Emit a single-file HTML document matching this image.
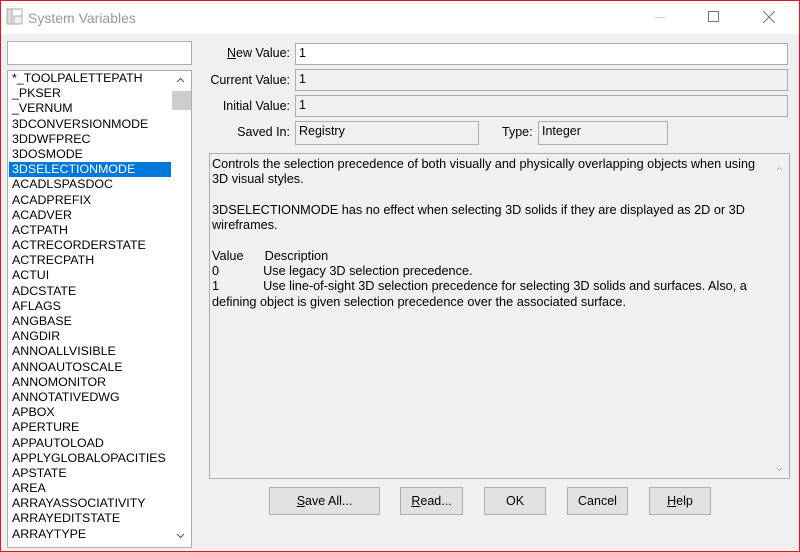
<!DOCTYPE html>
<html><head><meta charset="utf-8"><style>
*{box-sizing:border-box;margin:0;padding:0}
body{width:800px;height:552px;overflow:hidden;background:#f0f0f0;font-family:"Liberation Sans",Arial,sans-serif;font-size:12.5px;color:#000;position:relative}
.win{position:absolute;left:0;top:0;width:800px;height:552px;border:1px solid #e81123;background:#f0f0f0}
.title{position:absolute;left:0;top:0;width:798px;height:33px;background:#fff}
.title .t{position:absolute;left:27px;top:9px;font-size:14px;color:#999}
.abs{position:absolute}
.box{position:absolute;border:1px solid #adadad;background:#f0f0f0;padding:2px 3px;font-size:12.5px}
.lbl{position:absolute;text-align:right;width:100px}
.list{position:absolute;left:6px;top:69px;width:185px;height:478px;border:1px solid #adadad;background:#fff;overflow:hidden}
.list div{height:15.2px;line-height:15.2px;padding-left:3px;font-size:12.4px;width:162px;margin-left:1px;white-space:nowrap}
.sel{background:#0078d7;color:#fff}
.btn{position:absolute;top:486px;height:28px;border:1px solid #adadad;background:#e1e1e1;text-align:center;line-height:26px;font-size:12.5px}
.desc{position:absolute;left:208px;top:152px;width:581px;height:326px;border:1px solid #adadad;background:#f0f0f0;padding:3px 0 0 2px;line-height:15.3px;font-size:12.7px}
u{text-decoration:underline}
</style></head><body><div class="win">
<div class="title">
<svg class="abs" style="left:5px;top:7px" width="18" height="18"><rect x="1" y="1" width="15" height="15" fill="none" stroke="#aaa"/><rect x="1" y="1" width="5" height="15" fill="#ddd" stroke="#aaa"/><rect x="8" y="8" width="8" height="8" fill="#eee" stroke="#aaa"/></svg>
<div class="t">System Variables</div>
<div class="abs" style="left:654px;top:16px;width:10px;height:1px;background:#ccc"></div>
<div class="abs" style="left:707px;top:10px;width:11px;height:11px;border:1px solid #777"></div>
<svg class="abs" style="left:762px;top:10px" width="12" height="12"><path d="M0 0L12 12M12 0L0 12" stroke="#777" stroke-width="1"/></svg>
</div>
<div class="abs" style="left:6px;top:40px;width:185px;height:24px;border:1px solid #adadad;background:#fff"></div>
<div class="list">
<div>*_TOOLPALETTEPATH</div><div>_PKSER</div><div>_VERNUM</div><div>3DCONVERSIONMODE</div><div>3DDWFPREC</div><div>3DOSMODE</div><div class="sel">3DSELECTIONMODE</div><div>ACADLSPASDOC</div><div>ACADPREFIX</div><div>ACADVER</div><div>ACTPATH</div><div>ACTRECORDERSTATE</div><div>ACTRECPATH</div><div>ACTUI</div><div>ADCSTATE</div><div>AFLAGS</div><div>ANGBASE</div><div>ANGDIR</div><div>ANNOALLVISIBLE</div><div>ANNOAUTOSCALE</div><div>ANNOMONITOR</div><div>ANNOTATIVEDWG</div><div>APBOX</div><div>APERTURE</div><div>APPAUTOLOAD</div><div>APPLYGLOBALOPACITIES</div><div>APSTATE</div><div>AREA</div><div>ARRAYASSOCIATIVITY</div><div>ARRAYEDITSTATE</div><div>ARRAYTYPE</div>
<svg class="abs" style="left:168px;top:6px" width="9" height="6"><path d="M1 5L4.5 1.5L8 5" fill="none" stroke="#555"/></svg>
<div class="abs" style="left:163px;top:20px;width:19px;height:19px;background:#cdcdcd"></div>
<svg class="abs" style="left:168px;top:462px" width="9" height="6"><path d="M1 1L4.5 4.5L8 1" fill="none" stroke="#555"/></svg>
</div>
<div class="lbl" style="left:189px;top:45px"><u>N</u>ew Value:</div>
<div class="lbl" style="left:189px;top:72px">Current Value:</div>
<div class="lbl" style="left:189px;top:98px">Initial Value:</div>
<div class="lbl" style="left:189px;top:124px">Saved In:</div>
<div class="box" style="left:294px;top:42px;width:493px;height:22px;background:#fff">1</div>
<div class="box" style="left:294px;top:68px;width:493px;height:22px">1</div>
<div class="box" style="left:294px;top:94px;width:493px;height:22px">1</div>
<div class="box" style="left:294px;top:120px;width:184px;height:24px">Registry</div>
<div class="abs" style="left:501px;top:124px">Type:</div>
<div class="box" style="left:537px;top:120px;width:130px;height:24px">Integer</div>
<div class="desc">Controls the selection precedence of both visually and physically overlapping objects when using<br>3D visual styles.<br><br>3DSELECTIONMODE has no effect when selecting 3D solids if they are displayed as 2D or 3D<br>wireframes.<br><br>Value&nbsp;&nbsp;&nbsp;&nbsp;&nbsp;&nbsp;Description<br>0<span style="padding-left:44px">Use legacy 3D selection precedence.</span><br>1<span style="padding-left:44px">Use line-of-sight 3D selection precedence for selecting 3D solids and surfaces. Also, a</span><br>defining object is given selection precedence over the associated surface.
<svg class="abs" style="left:566px;top:12px" width="7" height="5"><path d="M1 4L3.5 1.5L6 4" fill="none" stroke="#bbb"/></svg>
<svg class="abs" style="left:566px;top:313px" width="7" height="5"><path d="M1 1L3.5 3.5L6 1" fill="none" stroke="#bbb"/></svg>
</div>
<div class="btn" style="left:268px;width:111px"><u>S</u>ave All...</div>
<div class="btn" style="left:399px;width:63px"><u>R</u>ead...</div>
<div class="btn" style="left:483px;width:62px">OK</div>
<div class="btn" style="left:566px;width:61px">Cancel</div>
<div class="btn" style="left:648px;width:62px"><u>H</u>elp</div>
</div></body></html>
